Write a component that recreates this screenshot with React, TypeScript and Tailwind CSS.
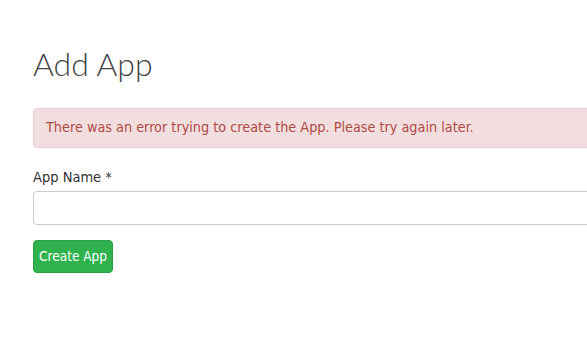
export default function App() {
  const font = { fontFamily: '"DejaVu Sans Condensed", "Roboto", sans-serif' };
  return (
    <div className="w-full h-screen overflow-hidden bg-white" style={font}>
      <div className="w-[1140px] pl-[33px] pt-[40px]">
        {/* Title */}
        <h1 className="text-[32px] leading-[48px] font-light text-[#444] font-['Lato',sans-serif]">Add App</h1>

        {/* Error alert */}
        <div className="mt-[20px] h-[40px] flex items-center px-[12px] bg-[#f2dede] border border-[#ebccd1] rounded text-[#b04a48] text-[14.3px]">
          There was an error trying to create the App. Please try again later.
        </div>

        {/* Form */}
        <form className="mt-[19px]">
          <label className="block text-[14.5px] leading-[20px] text-[#333] mb-[4px]">App Name *</label>
          <input type="text" className="block w-full h-[34px] border border-[#cccccc] rounded bg-white" />
          <button type="button" className="mt-[15px] h-[33px] w-[80px] rounded bg-[#30b24f] border border-[#28a044] text-white text-[13.5px]">
            Create App
          </button>
        </form>
      </div>
    </div>
  );
}
